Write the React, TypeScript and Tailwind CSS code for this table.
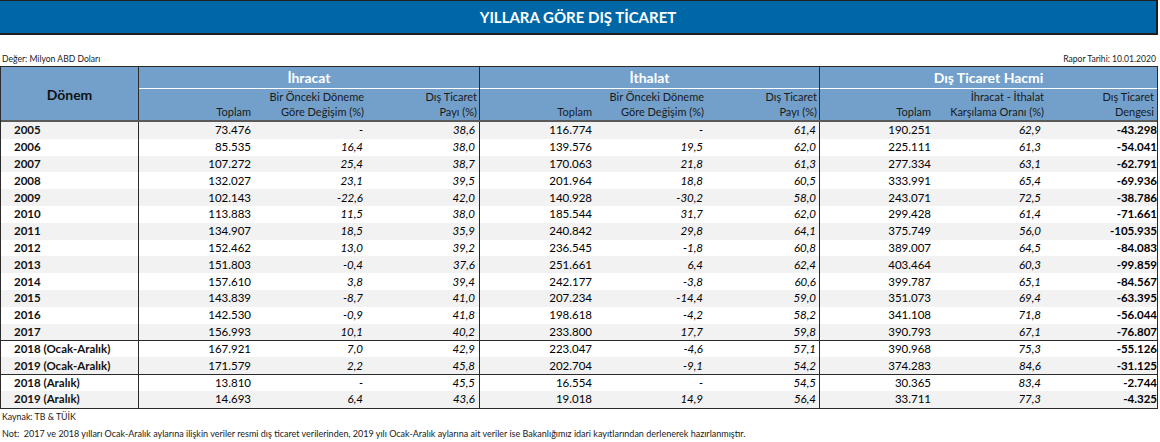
import React from "react";

type Row = [string, string, string, string, string, string, string, string, string, string];

const rows: Row[] = [
  ["2005", "73.476", "-", "38,6", "116.774", "-", "61,4", "190.251", "62,9", "-43.298"],
  ["2006", "85.535", "16,4", "38,0", "139.576", "19,5", "62,0", "225.111", "61,3", "-54.041"],
  ["2007", "107.272", "25,4", "38,7", "170.063", "21,8", "61,3", "277.334", "63,1", "-62.791"],
  ["2008", "132.027", "23,1", "39,5", "201.964", "18,8", "60,5", "333.991", "65,4", "-69.936"],
  ["2009", "102.143", "-22,6", "42,0", "140.928", "-30,2", "58,0", "243.071", "72,5", "-38.786"],
  ["2010", "113.883", "11,5", "38,0", "185.544", "31,7", "62,0", "299.428", "61,4", "-71.661"],
  ["2011", "134.907", "18,5", "35,9", "240.842", "29,8", "64,1", "375.749", "56,0", "-105.935"],
  ["2012", "152.462", "13,0", "39,2", "236.545", "-1,8", "60,8", "389.007", "64,5", "-84.083"],
  ["2013", "151.803", "-0,4", "37,6", "251.661", "6,4", "62,4", "403.464", "60,3", "-99.859"],
  ["2014", "157.610", "3,8", "39,4", "242.177", "-3,8", "60,6", "399.787", "65,1", "-84.567"],
  ["2015", "143.839", "-8,7", "41,0", "207.234", "-14,4", "59,0", "351.073", "69,4", "-63.395"],
  ["2016", "142.530", "-0,9", "41,8", "198.618", "-4,2", "58,2", "341.108", "71,8", "-56.044"],
  ["2017", "156.993", "10,1", "40,2", "233.800", "17,7", "59,8", "390.793", "67,1", "-76.807"],
  ["2018 (Ocak-Aralık)", "167.921", "7,0", "42,9", "223.047", "-4,6", "57,1", "390.968", "75,3", "-55.126"],
  ["2019 (Ocak-Aralık)", "171.579", "2,2", "45,8", "202.704", "-9,1", "54,2", "374.283", "84,6", "-31.125"],
  ["2018 (Aralık)", "13.810", "-", "45,5", "16.554", "-", "54,5", "30.365", "83,4", "-2.744"],
  ["2019 (Aralık)", "14.693", "6,4", "43,6", "19.018", "14,9", "56,4", "33.711", "77,3", "-4.325"],
];

const gridCols =
  "grid grid-cols-[138px_114px_113px_114px_114px_112px_114px_113px_113px_112px]";

function SubHead({ l1, l2 }: { l1?: string; l2: string }) {
  return (
    <div className="flex flex-col items-end justify-end pr-[2px] text-[11px] leading-[15px] text-[#1a1a1a]">
      <span>{l1 ?? "\u00a0"}</span>
      <span>{l2}</span>
    </div>
  );
}

function Group({
  title,
  cols,
  subs,
}: {
  title: string;
  cols: string;
  subs: { l1?: string; l2: string }[];
}) {
  return (
    <div className="flex flex-col border-r border-[#2b2b2b]">
      <div className="h-[22px] flex items-center justify-center text-white font-bold text-[14px] border-b border-white">
        {title}
      </div>
      <div className={`grid ${cols} h-[31px] pb-[1px]`}>
        {subs.map((s, i) => (
          <SubHead key={i} l1={s.l1} l2={s.l2} />
        ))}
      </div>
    </div>
  );
}

export default function App() {
  return (
    <div className="w-[1160px] h-[442px] bg-white text-black font-['Lato','Open_Sans',sans-serif] overflow-hidden">
      <div className="w-[1158px] h-[35px] bg-[#0067a7] border-t border-r-2 border-b-2 border-[#1e1e1e] flex items-center justify-center">
        <span className="text-white font-bold text-[15px]">YILLARA GÖRE DIŞ TİCARET</span>
      </div>
      <div className="w-[1158px] flex justify-between items-end h-[31px] pb-[2px] px-[2px] text-[8.6px] leading-[10px] text-[#1a1a1a]">
        <span>Değer: Milyon ABD Doları</span>
        <span>Rapor Tarihi: 10.01.2020</span>
      </div>
      <div className="w-[1158px] border-t border-l border-r border-b border-[#2b2b2b]">
        <div className="flex bg-[#72a0cb] border-b-2 border-[#5a5a5a] h-[55px]">
          <div className="w-[138px] shrink-0 flex items-center justify-center font-bold text-[14px] text-[#111] border-r border-[#2b2b2b] pt-[2px]">
            Dönem
          </div>
          <div className="w-[341px]">
            <Group
              title="İhracat"
              cols="grid-cols-[114px_113px_113px]"
              subs={[
                { l2: "Toplam" },
                { l1: "Bir Önceki Döneme", l2: "Göre Değişim (%)" },
                { l1: "Dış Ticaret", l2: "Payı (%)" },
              ]}
            />
          </div>
          <div className="w-[340px]">
            <Group
              title="İthalat"
              cols="grid-cols-[114px_112px_113px]"
              subs={[
                { l2: "Toplam" },
                { l1: "Bir Önceki Döneme", l2: "Göre Değişim (%)" },
                { l1: "Dış Ticaret", l2: "Payı (%)" },
              ]}
            />
          </div>
          <div className="flex-1 flex flex-col">
            <div className="h-[22px] flex items-center justify-center text-white font-bold text-[14px] border-b border-white">
              Dış Ticaret Hacmi
            </div>
            <div className="grid grid-cols-[113px_113px_110px] h-[31px] pb-[1px]">
              <SubHead l2="Toplam" />
              <SubHead l1="İhracat - İthalat" l2="Karşılama Oranı (%)" />
              <SubHead l1="Dış Ticaret" l2="Dengesi" />
            </div>
          </div>
        </div>
        <div className="flex flex-col">
          {rows.map((r, i) => {
            const sep = i === 13 || i === 15;
            return (
              <div
                key={i}
                className={`${gridCols} h-[16.8px] text-[11.5px] leading-[16px] ${
                  i % 2 === 0 ? "bg-[#f2f2f2]" : "bg-white"
                } ${sep ? "border-t border-[#2b2b2b]" : ""}`}
              >
                <div className="pl-[13px] font-bold border-r border-[#2b2b2b] text-[#111] flex items-center">
                  {r[0]}
                </div>
                <div className="pr-[2px] flex items-center justify-end">{r[1]}</div>
                <div className="pr-[3px] italic flex items-center justify-end">{r[2]}</div>
                <div className="pr-[4px] italic flex items-center justify-end border-r border-[#2b2b2b]">
                  {r[3]}
                </div>
                <div className="pr-[2px] flex items-center justify-end">{r[4]}</div>
                <div className="pr-[3px] italic flex items-center justify-end">{r[5]}</div>
                <div className="pr-[3px] italic flex items-center justify-end border-r border-[#2b2b2b]">
                  {r[6]}
                </div>
                <div className="pr-[2px] flex items-center justify-end">{r[7]}</div>
                <div className="pr-[5px] italic flex items-center justify-end">{r[8]}</div>
                <div className="pr-[1px] font-bold flex items-center justify-end">{r[9]}</div>
              </div>
            );
          })}
        </div>
      </div>
      <div className="px-[2px] text-[8.8px] leading-[10px] text-[#1a1a1a] mt-[3px]">Kaynak: TB &amp; TÜİK</div>
      <div className="px-[2px] text-[9px] leading-[10px] text-[#1a1a1a] mt-[7px] whitespace-pre">
        {"Not:  2017 ve 2018 yılları Ocak-Aralık aylarına ilişkin veriler resmi dış ticaret verilerinden, 2019 yılı Ocak-Aralık aylarına ait veriler ise Bakanlığımız idari kayıtlarından derlenerek hazırlanmıştır."}
      </div>
    </div>
  );
}
